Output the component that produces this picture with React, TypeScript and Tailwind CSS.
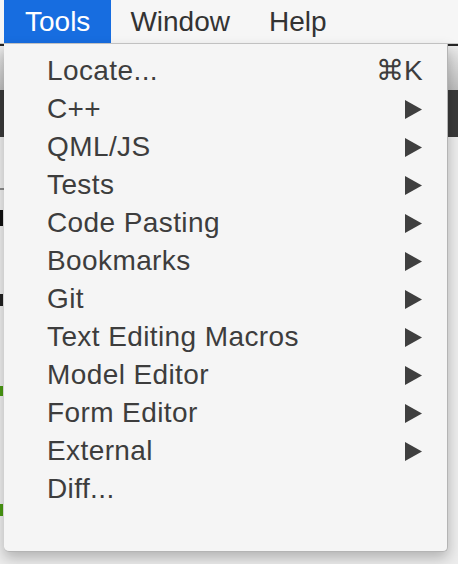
import React from "react";

const items: { label: string; shortcut?: string; sub?: boolean }[] = [
  { label: "Locate...", shortcut: "⌘K" },
  { label: "C++", sub: true },
  { label: "QML/JS", sub: true },
  { label: "Tests", sub: true },
  { label: "Code Pasting", sub: true },
  { label: "Bookmarks", sub: true },
  { label: "Git", sub: true },
  { label: "Text Editing Macros", sub: true },
  { label: "Model Editor", sub: true },
  { label: "Form Editor", sub: true },
  { label: "External", sub: true },
  { label: "Diff..." },
];

function Arrow() {
  return (
    <svg width="18" height="19" viewBox="0 0 18 19" className="block">
      <polygon points="0,0 17,9.5 0,19" fill="#3f3f3f" />
    </svg>
  );
}

export default function App() {
  return (
    <div
      className="relative w-[458px] h-[564px] overflow-hidden bg-[#ececec]"
      style={{ fontFamily: '"Liberation Sans", Arial, sans-serif' }}
    >
      {/* menu bar */}
      <div className="flex h-[44px] pl-[4px] bg-[#f6f6f6] border-b border-[#c9c9c9] text-[28px] leading-[43px]">
        <div className="px-[21px] bg-[#176de0] text-white">Tools</div>
        <div className="pl-[19px] pr-[20px] text-[#333333]">Window</div>
        <div className="px-[19px] text-[#333333]">Help</div>
      </div>

      {/* window behind the menu */}
      <div className="flex flex-col">
        <div className="h-[2px] bg-[#262626]" />
        <div className="h-[44px] bg-gradient-to-b from-[#ebebeb] to-[#bdbdbd]" />
        <div className="h-[47px] bg-[#3a3a3a]" />
        <div className="flex flex-col h-[430px] bg-[#ededed]">
          <div className="mt-[51px] w-[8px] h-[2px] bg-[#8a8a8a]" />
          <div className="mt-[20px] w-[3px] h-[16px] bg-[#111111]" />
          <div className="mt-[68px] w-[3px] h-[12px] bg-[#222222]" />
          <div className="mt-[80px] w-[3px] h-[10px] bg-[#4a9a12]" />
          <div className="mt-[108px] w-[3px] h-[12px] bg-[#4a9a12]" />
        </div>
      </div>

      {/* dropdown */}
      <div className="absolute left-[4px] top-[44px] w-[444px] h-[508px] pt-[8px] pl-[43px] pr-[24px] bg-[#f5f5f5] border-r border-b border-[#b4b4b4] rounded-b-[5px] shadow-[0_6px_14px_rgba(0,0,0,0.25)]">
        {items.map((it) => (
          <div key={it.label} className="flex items-center justify-between h-[38px] text-[28px] leading-[38px] tracking-[0.4px] text-[#3d3d3d]">
            <span>{it.label}</span>
            {it.shortcut && <span>{it.shortcut}</span>}
            {it.sub && <Arrow />}
          </div>
        ))}
      </div>
    </div>
  );
}
